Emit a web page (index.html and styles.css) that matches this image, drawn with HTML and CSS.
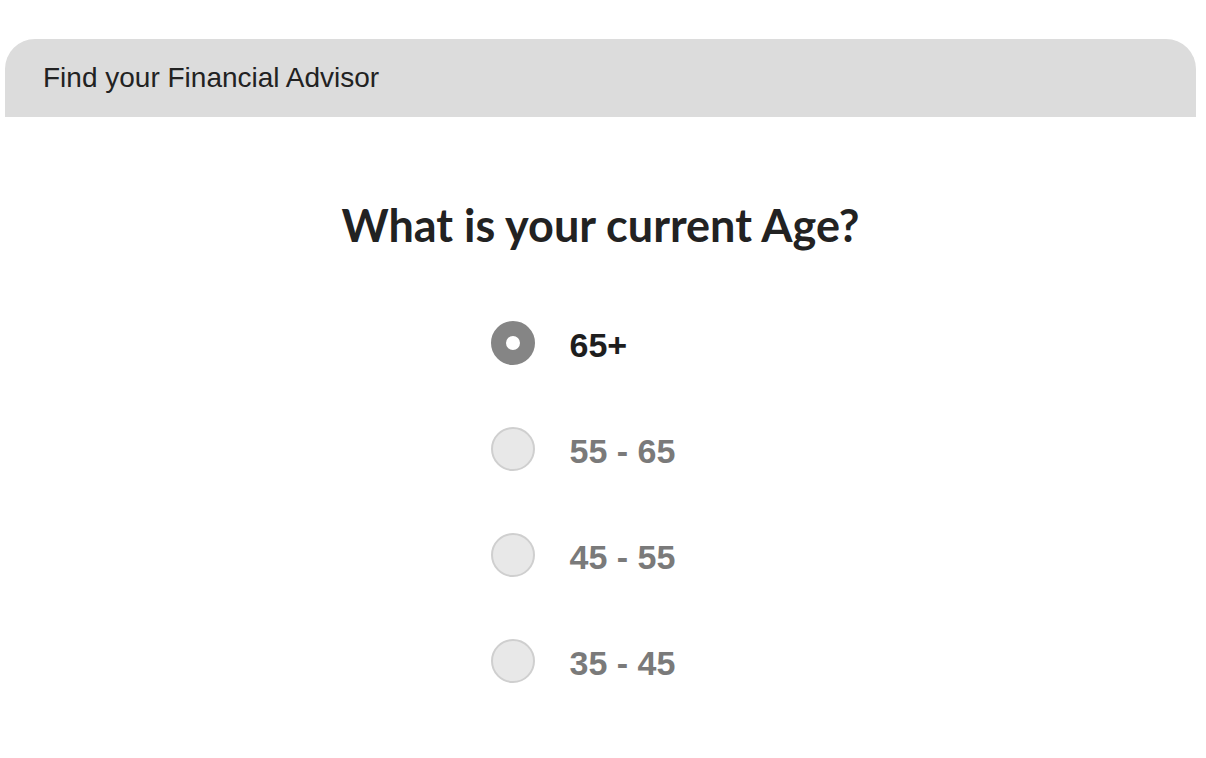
FILE: index.html
```html
<!DOCTYPE html>
<html>
<head>
<meta charset="utf-8">
<link rel="stylesheet" href="styles.css">
</head>
<body>
<div class="page">
  <header class="bar">Find your Financial Advisor</header>
  <main class="quiz">
    <h1 class="question">What is your current Age?</h1>
    <ul class="options">
      <li class="option selected"><span class="radio"></span><span class="label">65+</span></li>
      <li class="option"><span class="radio"></span><span class="label">55 - 65</span></li>
      <li class="option"><span class="radio"></span><span class="label">45 - 55</span></li>
      <li class="option"><span class="radio"></span><span class="label">35 - 45</span></li>
    </ul>
  </main>
</div>
</body>
</html>
```
FILE: styles.css
```css
html, body {
  margin: 0;
  padding: 0;
  background: #ffffff;
}
.page {
  padding: 39px 10px 0 5px;
}
.bar {
  height: 78px;
  background: #dcdcdc;
  border-radius: 30px 30px 0 0;
  font-family: "Liberation Sans", Arial, sans-serif;
  font-size: 28px;
  color: #222;
  display: flex;
  align-items: center;
  padding-left: 38px;
  box-sizing: border-box;
}
.quiz {
  display: flex;
  flex-direction: column;
  align-items: center;
}
.question {
  margin: 80px 0 0 0;
  font-family: "Lato", sans-serif;
  font-weight: 700;
  font-size: 45px;
  line-height: 56px;
  color: #222;
}
.options {
  list-style: none;
  margin: 68px 0 0 0;
  padding: 0;
  display: flex;
  flex-direction: column;
  gap: 62px;
  width: 220px;
}
.option {
  display: flex;
  align-items: center;
  height: 44px;
  gap: 35px;
}
.radio {
  width: 44px;
  height: 44px;
  box-sizing: border-box;
  border-radius: 50%;
  background: #e8e8e8;
  border: 2px solid #cfcfcf;
  flex: none;
}
.selected .radio {
  background: #ffffff;
  border: 15px solid #858585;
}
.label {
  font-family: "Liberation Sans", Arial, sans-serif;
  font-weight: 700;
  font-size: 34px;
  color: #7a7a7a;
  position: relative;
  top: 2px;
}
.selected .label {
  color: #1e1e1e;
}
```
